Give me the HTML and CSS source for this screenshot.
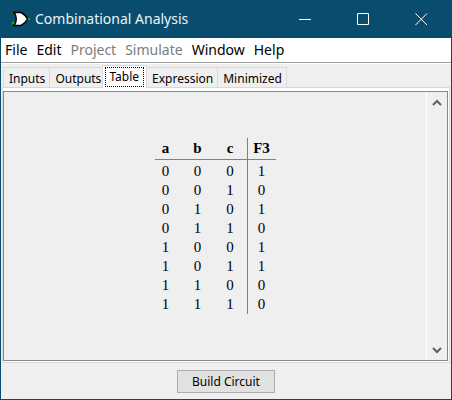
FILE: index.html
```html
<!DOCTYPE html>
<html lang="en">
<head>
<meta charset="utf-8">
<title>Combinational Analysis</title>
<link rel="stylesheet" href="styles.css">
</head>
<body>
<div class="window">
  <header class="titlebar">
    <svg class="logo" width="20" height="16" viewBox="0 0 20 16" aria-hidden="true">
      <path d="M1 4h4" stroke="#006400" stroke-width="2"/>
      <path d="M1 12h4M17 8h2" stroke="#00c800" stroke-width="2"/>
      <path d="M3 1.500h7C13 3 15 5 16.500 8c-1.500 3-3.500 5-6.500 6.500H3C6 11 6 5 3 1.500z" fill="#fff" stroke="#000" stroke-width="1.500"/>
    </svg>
    <h1 class="title">Combinational Analysis</h1>
    <div class="controls">
      <button class="control" aria-label="Minimize"><svg width="13" height="13" viewBox="0 0 13 13"><path d="M0 6.500h12"/></svg></button>
      <button class="control" aria-label="Maximize"><svg width="13" height="13" viewBox="0 0 13 13"><path d="M.5 .5h11v11H.5z"/></svg></button>
      <button class="control" aria-label="Close"><svg width="13" height="13" viewBox="0 0 13 13"><path d="M.5 .5l11.500 11.500M12 .5L.5 12"/></svg></button>
    </div>
  </header>
  <nav class="menubar">
    <button class="menu">File</button>
    <button class="menu">Edit</button>
    <button class="menu" disabled>Project</button>
    <button class="menu" disabled>Simulate</button>
    <button class="menu">Window</button>
    <button class="menu">Help</button>
  </nav>
  <main class="content">
    <div class="tabs" role="tablist">
      <button class="tab" role="tab">Inputs</button>
      <button class="tab" role="tab">Outputs</button>
      <button class="tab selected" role="tab" aria-selected="true"><span class="focus">Table</span></button>
      <button class="tab" role="tab">Expression</button>
      <button class="tab" role="tab">Minimized</button>
    </div>
    <section class="panel" role="tabpanel">
      <div class="pane">
        <div class="view">
          <table class="truth">
            <thead><tr><th>a</th><th>b</th><th>c</th><th>F3</th></tr></thead>
            <tbody>
              <tr><td>0</td><td>0</td><td>0</td><td>1</td></tr>
              <tr><td>0</td><td>0</td><td>1</td><td>0</td></tr>
              <tr><td>0</td><td>1</td><td>0</td><td>1</td></tr>
              <tr><td>0</td><td>1</td><td>1</td><td>0</td></tr>
              <tr><td>1</td><td>0</td><td>0</td><td>1</td></tr>
              <tr><td>1</td><td>0</td><td>1</td><td>1</td></tr>
              <tr><td>1</td><td>1</td><td>0</td><td>0</td></tr>
              <tr><td>1</td><td>1</td><td>1</td><td>0</td></tr>
            </tbody>
          </table>
        </div>
        <div class="scrollbar">
          <button class="arrow" aria-label="Scroll up"><svg width="10" height="8" viewBox="0 0 10 8"><path d="M1 6l4-4 4 4"/></svg></button>
          <button class="arrow" aria-label="Scroll down"><svg width="10" height="8" viewBox="0 0 10 8"><path d="M1 2l4 4 4-4"/></svg></button>
        </div>
      </div>
    </section>
    <footer class="actions"><button class="build">Build Circuit</button></footer>
  </main>
</div>
</body>
</html>
```
FILE: styles.css
```css
* {
  box-sizing: border-box;
}

body {
  margin: 0;
}

button {
  margin: 0;
  padding: 0;
  border: 0;
  background: none;
  color: #000;
  font: inherit;
}

svg {
  display: block;
}

.window {
  display: flex;
  flex-direction: column;
  min-height: 100vh;
  border: solid #084d6e;
  border-width: 0 1px 1px;
  background: #efefef;
}

.titlebar {
  display: flex;
  align-items: center;
  height: 38px;
  padding-left: 10px;
  background: #084d6e;
}

.title {
  flex: 1;
  margin: 0 0 0 4px;
  color: #eef3f6;
  font: 14px/20px "Noto Sans", sans-serif;
}

.controls {
  display: flex;
  margin-right: 1px;
}

.control {
  display: flex;
  align-items: center;
  justify-content: center;
  width: 58px;
  height: 38px;
}

.control path {
  fill: none;
  stroke: #fff;
}

.menubar {
  display: flex;
  gap: 9px;
  height: 25px;
  padding: 0 4px;
  border-bottom: 1px solid #a0a0a0;
  background: #fff;
  font: 14px/24px "Noto Sans", sans-serif;
}

.menu:disabled {
  color: #7c7c7c;
}

.content {
  display: flex;
  flex: 1;
  flex-direction: column;
  padding: 2px 1px 0;
  border-top: 1px solid #fff;
  font: 12px/16px "Noto Sans", sans-serif;
}

.tabs {
  display: flex;
  align-items: flex-end;
  height: 21px;
  padding-left: 1px;
}

.tab {
  height: 20px;
  padding: 2px 4px 0 5px;
  border: 1px solid #d9d9d9;
  border-bottom: 0;
  border-left-width: 0;
  white-space: nowrap;
}

.tab:first-child {
  border-left-width: 1px;
}

.selected {
  z-index: 1;
  height: 23px;
  margin: 0 0 -1px -4px;
  padding: 1px 2px;
  border-left-width: 1px;
  background: #fff;
}

.focus {
  display: block;
  height: 20px;
  padding: 1px 4px 1px 3px;
  border: 1px dotted #000;
}

.panel {
  display: flex;
  flex: 1;
  padding: 3px 1px 1px 0;
  border: 1px solid #d9d9d9;
  background: #fff;
}

.pane {
  display: flex;
  flex: 1;
  border: 1px solid #828790;
  background: #efefef;
}

.view {
  display: flex;
  flex: 1;
  align-items: center;
  justify-content: center;
}

.scrollbar {
  display: flex;
  flex-direction: column;
  justify-content: space-between;
  width: 21px;
  border-left: 1px solid #fff;
}

.arrow {
  display: flex;
  align-items: center;
  justify-content: center;
  height: 21px;
}

.arrow path {
  fill: none;
  stroke: #606060;
  stroke-width: 2;
}

.truth {
  border-collapse: separate;
  border-spacing: 0;
  font: 15px/19px "Liberation Serif", serif;
  text-align: center;
}

.truth th,
.truth td {
  width: 32px;
  padding: 0;
}

.truth th {
  height: 22px;
  border-bottom: 1px solid #808080;
}

.truth th:first-child,
.truth td:first-child {
  width: 27px;
  padding-right: 5px;
}

.truth th:nth-child(3),
.truth td:nth-child(3) {
  width: 34px;
  border-right: 1px solid #808080;
}

.truth th:last-child,
.truth td:last-child {
  width: 28px;
}

.truth tbody tr:first-child td {
  padding-top: 2px;
}

.actions {
  display: flex;
  justify-content: center;
  padding: 7px 0 6px;
}

.build {
  height: 23px;
  padding: 0 14px;
  border: 1px solid #adadad;
  background: #e1e1e1;
}
```
